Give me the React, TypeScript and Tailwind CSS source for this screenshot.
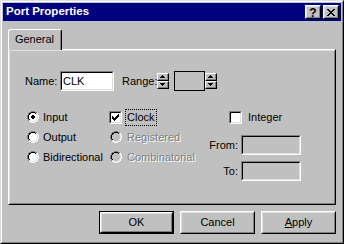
import React from 'react';

type PixProps = { rows: string[]; colors: Record<string, string> };

function Pix({ rows, colors }: PixProps) {
  const h = rows.length;
  const w = rows[0].length;
  const rects: React.ReactNode[] = [];
  rows.forEach((row, y) =>
    row.split('').forEach((c, x) => {
      const fill = colors[c];
      if (fill) rects.push(<rect key={`${x}-${y}`} x={x} y={y} width={1} height={1} fill={fill} />);
    })
  );
  return (
    <svg width={w} height={h} viewBox={`0 0 ${w} ${h}`} shapeRendering="crispEdges" className="block shrink-0">
      {rects}
    </svg>
  );
}

const RADIO = [
  '....OOOO....',
  '..OOIIIIOO..',
  '.OIIiiiiIIO.',
  '.OIiiiiiiIO.',
  'OIiiiiiiiiIO',
  'OIiiiiiiiiIO',
  'OIiiiiiiiiIO',
  'OIiiiiiiiiIO',
  '.OIiiiiiiIO.',
  '.OIIiiiiIIO.',
  '..OOIIIIOO..',
  '....OOOO....',
];

const DOT = new Set(['5,4', '6,4', '4,5', '5,5', '6,5', '7,5', '4,6', '5,6', '6,6', '7,6', '5,7', '6,7']);

const CHECK = ['......X', '.....XX', 'X...XXX', 'XX.XXX.', 'XXXXX..', '.XXX...', '..X....'];

const CLOSE = ['XX....XX', '.XX..XX.', '..XXXX..', '...XX...', '..XXXX..', '.XX..XX.', 'XX....XX'];

const UP = ['..X..', '.XXX.', 'XXXXX'];
const DOWN = ['XXXXX', '.XXX.', '..X..'];

function Radio({ checked = false, disabled = false }: { checked?: boolean; disabled?: boolean }) {
  const rows = RADIO.map((row, y) =>
    row
      .split('')
      .map((c, x) => {
        if (c === 'O') return x + y < 11 ? 'G' : 'W';
        if (c === 'I') return x + y < 11 ? 'K' : 'L';
        if (c === 'i') return checked && DOT.has(`${x},${y}`) ? 'K' : 'i';
        return '.';
      })
      .join('')
  );
  return (
    <Pix
      rows={rows}
      colors={{ G: '#808080', W: '#ffffff', K: '#000000', L: '#dfdfdf', i: disabled ? '#c0c0c0' : '#ffffff' }}
    />
  );
}

function Checkbox({ checked = false }: { checked?: boolean }) {
  return (
    <div className="w-[13px] h-[13px] shrink-0 border border-t-[#808080] border-l-[#808080] border-r-white border-b-white">
      <div className="w-full h-full border border-t-black border-l-black border-r-[#dfdfdf] border-b-[#dfdfdf] bg-white p-px">
        {checked && <Pix rows={CHECK} colors={{ X: '#000000' }} />}
      </div>
    </div>
  );
}

function CapBtn({ children, className = '' }: { children: React.ReactNode; className?: string }) {
  return (
    <div className={`w-[16px] h-[14px] shrink-0 border border-t-white border-l-white border-r-black border-b-black ${className}`}>
      <div className="w-full h-full border border-t-[#dfdfdf] border-l-[#dfdfdf] border-r-[#808080] border-b-[#808080] bg-[#c0c0c0] flex items-center justify-center">
        {children}
      </div>
    </div>
  );
}

function SpinBtn({ up }: { up?: boolean }) {
  return (
    <div className="w-[12px] h-[8px] border border-t-white border-l-white border-r-black border-b-black">
      <div className="w-full h-full border-r border-b border-r-[#808080] border-b-[#808080] bg-[#c0c0c0] flex items-center justify-center">
        <Pix rows={up ? UP : DOWN} colors={{ X: '#000000' }} />
      </div>
    </div>
  );
}

function Spinner() {
  return (
    <div className="flex flex-col shrink-0">
      <SpinBtn up />
      <SpinBtn />
    </div>
  );
}

function Field({ className = '', bg = 'bg-white', children }: { className?: string; bg?: string; children?: React.ReactNode }) {
  return (
    <div className={`h-[20px] shrink-0 border border-t-[#808080] border-l-[#808080] border-r-white border-b-white ${className}`}>
      <div className={`h-full border border-t-black border-l-black border-r-[#dfdfdf] border-b-[#dfdfdf] flex items-center px-[1px] ${bg}`}>
        {children}
      </div>
    </div>
  );
}

function Button({ children, isDefault = false }: { children: React.ReactNode; isDefault?: boolean }) {
  if (isDefault) {
    return (
      <div className="w-[75px] h-[23px] border border-black">
        <div className="w-full h-full border border-t-white border-l-white border-r-black border-b-black">
          <div className="w-full h-full border border-t-[#dfdfdf] border-l-[#dfdfdf] border-r-[#808080] border-b-[#808080] flex items-center justify-center">
            {children}
          </div>
        </div>
      </div>
    );
  }
  return (
    <div className="w-[75px] h-[23px] border border-t-white border-l-white border-r-black border-b-black">
      <div className="w-full h-full border border-t-[#dfdfdf] border-l-[#dfdfdf] border-r-[#808080] border-b-[#808080] flex items-center justify-center">
        {children}
      </div>
    </div>
  );
}

const disabledText = 'text-[#808080] [text-shadow:1px_1px_0_#ffffff]';

export default function App() {
  return (
    <div className="w-[344px] h-[244px] bg-[#c0c0c0] font-['Liberation_Sans',Arial,sans-serif] text-[11px] leading-none text-black border border-t-[#dfdfdf] border-l-[#dfdfdf] border-r-black border-b-black">
      <div className="h-full border border-t-white border-l-white border-r-[#808080] border-b-[#808080] p-px flex flex-col">
        {/* title bar */}
        <div className="h-[18px] shrink-0 bg-[#000080] flex items-center pl-[3px] pr-[2px]">
          <span className="flex-1 text-white font-bold text-[11.5px]">Port Properties</span>
          <CapBtn>
            <span className="font-bold text-[12px] leading-none mt-[1px]">?</span>
          </CapBtn>
          <CapBtn className="ml-[2px]">
            <Pix rows={CLOSE} colors={{ X: '#000000' }} />
          </CapBtn>
        </div>

        <div className="flex-1 flex flex-col px-[5px] pt-[8px]">
          {/* tab */}
          <div className="flex">
            <div className="relative z-10 -mb-px w-[54px] h-[21px] bg-[#c0c0c0] rounded-t-[3px] border-t border-l border-r border-t-white border-l-white border-r-black">
              <div className="h-full border-r border-r-[#808080] flex items-center justify-center pb-[2px]">General</div>
            </div>
          </div>

          {/* panel */}
          <div className="h-[156px] border border-t-white border-l-white border-r-black border-b-black">
            <div className="h-full border border-t-[#dfdfdf] border-l-[#dfdfdf] border-r-[#808080] border-b-[#808080] pl-[15px] pt-[20px] flex flex-col">
              {/* name / range row */}
              <div className="flex items-center h-[20px]">
                <span className="w-[35px]">Name:</span>
                <Field className="w-[54px]">CLK</Field>
                <span className="ml-[8px] w-[35px]">Range:</span>
                <Spinner />
                <div className="ml-[5px] w-[31px] h-[20px] border border-black" />
                <Spinner />
              </div>

              {/* options */}
              <div className="flex mt-[16px]">
                <div className="w-[82px] ml-[2px] flex flex-col">
                  <div className="h-[20px] flex items-center gap-[4px]">
                    <Radio checked />
                    <span>Input</span>
                  </div>
                  <div className="h-[20px] flex items-center gap-[4px]">
                    <Radio />
                    <span>Output</span>
                  </div>
                  <div className="h-[20px] flex items-center gap-[4px]">
                    <Radio />
                    <span>Bidirectional</span>
                  </div>
                </div>

                <div className="w-[103px] flex flex-col">
                  <div className="h-[20px] flex items-center">
                    <Checkbox checked />
                    <span className="ml-[3px] px-[1px] py-[2px] border border-dotted border-black">Clock</span>
                  </div>
                  <div className="h-[20px] flex items-center pl-px gap-[5px]">
                    <Radio disabled />
                    <span className={disabledText}>Registered</span>
                  </div>
                  <div className="h-[20px] flex items-center pl-px gap-[5px]">
                    <Radio disabled />
                    <span className={disabledText}>Combinatorial</span>
                  </div>
                </div>

                <div className="w-[89px] flex flex-col">
                  <div className="h-[20px] flex items-center pl-[17px]">
                    <Checkbox />
                    <span className="ml-[6px]">Integer</span>
                  </div>
                  <div className="h-[20px] mt-[8px] flex items-center justify-end">
                    <span className="mr-[3px]">From:</span>
                    <Field className="w-[60px]" bg="bg-[#c0c0c0]" />
                  </div>
                  <div className="h-[20px] mt-[6px] flex items-center justify-end">
                    <span className="mr-[3px]">To:</span>
                    <Field className="w-[60px]" bg="bg-[#c0c0c0]" />
                  </div>
                </div>
              </div>
            </div>
          </div>

          {/* buttons */}
          <div className="flex justify-end gap-[6px] mt-[6px]">
            <Button isDefault>OK</Button>
            <Button>Cancel</Button>
            <Button>
              <span>
                <span className="underline underline-offset-1">A</span>pply
              </span>
            </Button>
          </div>
        </div>
      </div>
    </div>
  );
}
